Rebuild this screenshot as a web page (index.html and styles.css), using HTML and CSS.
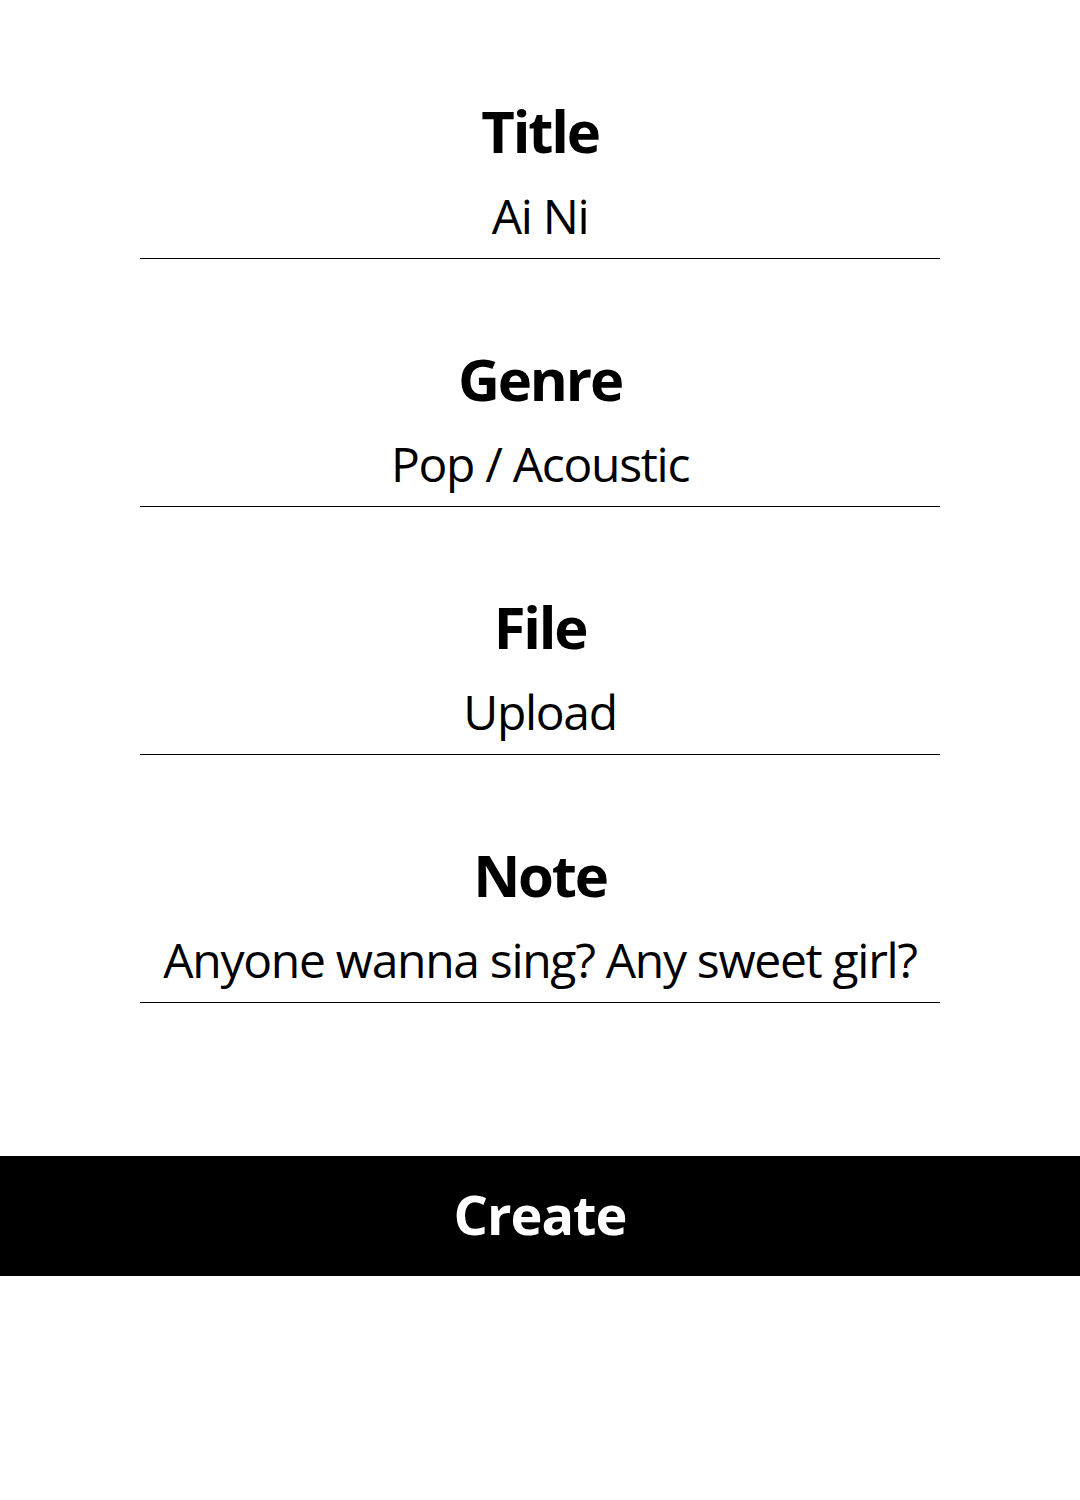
FILE: index.html
```html
<!DOCTYPE html>
<html lang="en">
<head>
<meta charset="utf-8">
<title>Create</title>
<link rel="stylesheet" href="styles.css">
</head>
<body>
<main class="page">
  <form class="form">
    <div class="field">
      <div class="label">Title</div>
      <div class="value">Ai Ni</div>
    </div>
    <div class="field">
      <div class="label">Genre</div>
      <div class="value">Pop / Acoustic</div>
    </div>
    <div class="field">
      <div class="label">File</div>
      <div class="value">Upload</div>
    </div>
    <div class="field">
      <div class="label">Note</div>
      <div class="value">Anyone wanna sing? Any sweet girl?</div>
    </div>
  </form>
  <button class="create" type="button">Create</button>
</main>
</body>
</html>
```

FILE: styles.css
```css
html, body {
  margin: 0;
  padding: 0;
  background: #fff;
}
body {
  font-family: "Open Sans", "Noto Sans", sans-serif;
  color: #000;
}
.page {
  width: 1080px;
  height: 1500px;
  display: flex;
  flex-direction: column;
  align-items: center;
}
.form {
  width: 800px;
  padding-top: 96px;
  display: flex;
  flex-direction: column;
  gap: 85px;
}
.field {
  display: flex;
  flex-direction: column;
  align-items: center;
  padding-bottom: 12px;
  border-bottom: 1px solid #000;
}
.label {
  font-size: 58px;
  font-weight: 700;
  line-height: 70px;
  letter-spacing: -2.2px;
}
.value {
  margin-top: 20px;
  font-size: 48px;
  font-weight: 400;
  line-height: 60px;
  letter-spacing: -1.3px;
}
.create {
  margin-top: 153px;
  width: 1080px;
  height: 120px;
  border: 0;
  padding: 0 0 5px;
  background: #000;
  color: #fff;
  font-family: "Open Sans", "Noto Sans", sans-serif;
  font-size: 54px;
  font-weight: 700;
  letter-spacing: -1px;
  cursor: pointer;
}
```
